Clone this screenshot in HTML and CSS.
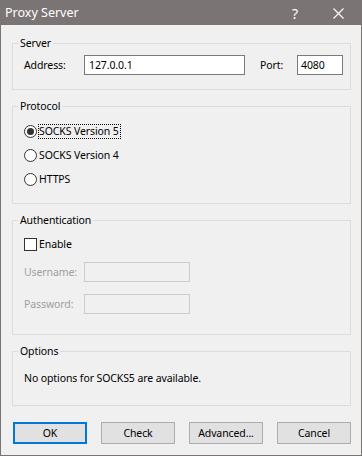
FILE: index.html
```html
<!DOCTYPE html>
<html>
<head>
<meta charset="utf-8">
<link rel="stylesheet" href="styles.css">
</head>
<body>
<div class="window">
  <div class="titlebar">
    <span class="title">Proxy Server</span>
    <span class="help">?</span>
    <span class="close"><svg width="11" height="11" viewBox="0 0 11 11"><path d="M0.5 0.5 L10.5 10.5 M10.5 0.5 L0.5 10.5" stroke="#fff" stroke-width="1.1" fill="none"/></svg></span>
  </div>
  <div class="content">
    <fieldset class="group">
      <legend>Server</legend>
      <div class="gbody server">
        <span class="lbl">Address:</span>
        <div class="field addr">127.0.0.1</div>
        <span class="lbl port-lbl">Port:</span>
        <div class="field port">4080</div>
      </div>
    </fieldset>
    <fieldset class="group protocol-group">
      <legend>Protocol</legend>
      <div class="gbody protocol">
        <div class="opt"><span class="radio checked"></span><span class="optlbl focus">SOCKS Version 5</span></div>
        <div class="opt"><span class="radio"></span><span class="optlbl">SOCKS Version 4</span></div>
        <div class="opt"><span class="radio"></span><span class="optlbl">HTTPS</span></div>
      </div>
    </fieldset>
    <fieldset class="group">
      <legend>Authentication</legend>
      <div class="gbody auth">
        <div class="opt"><span class="check"></span><span class="optlbl">Enable</span></div>
        <div class="authrow user"><span class="lbl disabled">Username:</span><div class="field dis"></div></div>
        <div class="authrow pass"><span class="lbl disabled">Password:</span><div class="field dis"></div></div>
      </div>
    </fieldset>
    <fieldset class="group">
      <legend>Options</legend>
      <div class="gbody options">No options for SOCKS5 are available.</div>
    </fieldset>
    <div class="buttons">
      <div class="btn default">OK</div>
      <div class="btn">Check</div>
      <div class="btn">Advanced...</div>
      <div class="btn">Cancel</div>
    </div>
  </div>
</div>
</body>
</html>
```
FILE: styles.css
```css
* { box-sizing: border-box; }
html, body { margin: 0; padding: 0; background: #f0f0f0; }
body {
  font-family: "Noto Sans", "Liberation Sans", sans-serif;
  font-size: 10.5px;
  letter-spacing: -0.1px;
  color: #000;
}
.window {
  width: 362px;
  height: 456px;
  border: 1px solid #7a7574;
  border-top: none;
  display: flex;
  flex-direction: column;
  background: #f0f0f0;
}
.titlebar {
  height: 25px;
  margin: 0 -1px;
  background: #7a7574;
  color: #fff;
  display: flex;
  align-items: center;
  position: relative;
}
.title {
  font-size: 12.5px;
  letter-spacing: 0;
  margin-left: 5px;
  line-height: 25px;
}
.help {
  position: absolute;
  left: 292px;
  top: 0;
  font-size: 14px;
  line-height: 27px;
}
.close {
  position: absolute;
  left: 333px;
  top: 8px;
  width: 11px;
  height: 11px;
  display: block;
}
.close svg { display: block; }
.content {
  padding: 11px 10px 0 11px;
  display: flex;
  flex-direction: column;
}
.group {
  margin: 0;
  padding: 0;
  border: 1px solid #dcdcdc;
  min-width: 0;
}
.group + .group { margin-top: 9px; }
.group legend {
  padding: 0 2px;
  margin-left: 5px;
  line-height: 14px;
}
.gbody { padding-left: 11px; }
.server {
  display: flex;
  align-items: center;
  padding-top: 5px;
  padding-bottom: 14px;
}
.lbl { width: 60px; line-height: 14px; }
.field {
  height: 20px;
  border: 1px solid #7a7a7a;
  background: #fff;
  line-height: 18px;
  padding-left: 4px;
}
.addr { width: 161px; }
.port-lbl { margin-left: 15px; width: 37px; }
.port { width: 46px; padding-left: 3px; }
.protocol {
  padding-top: 10px;
  padding-bottom: 16px;
  display: flex;
  flex-direction: column;
  gap: 8px;
}
.opt {
  display: flex;
  align-items: center;
  height: 16px;
}
.radio {
  width: 13px;
  height: 13px;
  border: 1px solid #333;
  border-radius: 50%;
  background: #fff;
  display: flex;
  align-items: center;
  justify-content: center;
  margin-right: 2px;
}
.radio.checked::after {
  content: "";
  width: 7px;
  height: 7px;
  border-radius: 50%;
  background: #333;
}
.optlbl { line-height: 13px; padding: 0 1px 0 0; }
.focus { outline: 1px dotted #000; outline-offset: 0; }
.check {
  width: 13px;
  height: 13px;
  border: 1px solid #333;
  background: #fff;
  margin-right: 2px;
}
.auth {
  padding-top: 9px;
  padding-bottom: 20px;
  display: flex;
  flex-direction: column;
}
.authrow { display: flex; align-items: center; }
.user { margin-top: 10px; }
.pass { margin-top: 12px; }
.disabled { color: #a0a0a0; }
.field.dis {
  width: 106px;
  border-color: #cccccc;
  background: #f0f0f0;
}
.options {
  padding-top: 12px;
  padding-bottom: 19px;
  line-height: 16px;
}
.buttons {
  margin-top: 16px;
  margin-left: 1px;
  margin-right: 0;
  display: flex;
  justify-content: space-between;
}
.btn {
  width: 74px;
  height: 22px;
  border: 1px solid #adadad;
  background: #e1e1e1;
  text-align: center;
  line-height: 20px;
}
.btn.default {
  border: 2px solid #0078d7;
  line-height: 18px;
}
```
